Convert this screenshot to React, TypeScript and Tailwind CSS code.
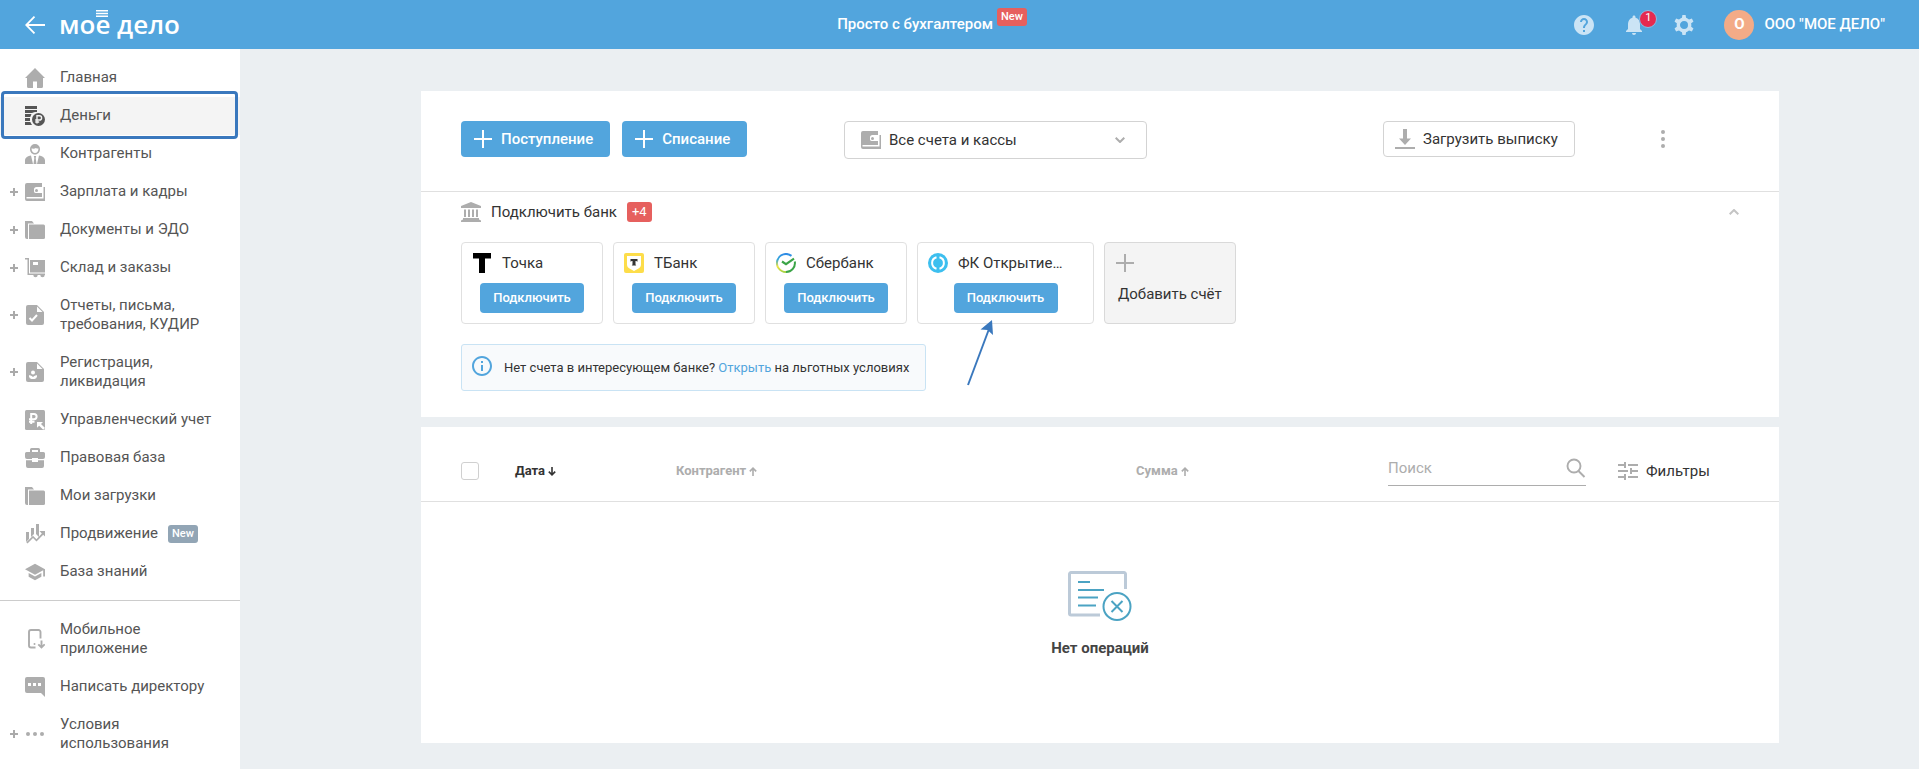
import type { ReactNode } from "react"
import { MdHelp, MdInfoOutline, MdNotifications, MdSchool } from "react-icons/md"
import clsx from "clsx"

function Icon({ children, className }: { children: ReactNode; className?: string }) {
  return (
    <svg viewBox="0 0 20 20" className={clsx("size-5 shrink-0", className)} fill="currentColor" aria-hidden="true">
      {children}
    </svg>
  )
}

const HomeIcon = () => (
  <Icon>
    <path d="M10 0 0 10h2v8.500a1.500 1.500 0 0 0 1.500 1.500H8v-6.500h4V20h4.500a1.500 1.500 0 0 0 1.500-1.500V10h2L10 0Z" />
  </Icon>
)

const MoneyIcon = () => (
  <Icon>
    <path d="M0 0h12v3H0zM0 4h12v2H10q-2 .5-3 1H0zM0 8h6.500l-1.200 3H0zM0 12h5v3H0zM0 16h5.300l1.700 3H0z" />
    <circle cx="13.500" cy="13.500" r="6.500" />
    <path d="M12 17.500V9.800h2.500a2 2 0 0 1 0 4.200H10.200M10.200 16h4" stroke="#f4f4f4" strokeWidth="1.400" fill="none" />
  </Icon>
)

const PersonIcon = () => (
  <Icon>
    <path
      fillRule="evenodd"
      d="M10 0a5 5 0 0 1 5 5c0 3-2 5.500-5 5.500S5 8 5 5a5 5 0 0 1 5-5ZM6.500 4.500C6.500 7 8 9 10 9s3.500-2 3.500-4.500c-1 .3-2 0-2.500-.5-1 .7-3 .8-4.500.5Z"
    />
    <path d="M6 11.500 8 20H0v-3.500C0 13.500 3 12 6 11.500ZM14 11.500 12 20h8v-3.500c0-3-3-4.500-6-5ZM8.800 12h2.400l-.5 2 .8 6h-3l.8-6z" />
  </Icon>
)

const WalletIcon = ({ className }: { className?: string }) => (
  <Icon className={className}>
    <path
      fillRule="evenodd"
      d="M2 1h15v4h-5.500a2.500 2.500 0 0 0-2.500 2.500v1A2.500 2.500 0 0 0 11.500 11H17v4H1.500v1.500H18.500V5H20v14H2a2 2 0 0 1-2-2V3a2 2 0 0 1 2-2Z"
    />
    <path d="M11.500 6H17v4.500h-5.500z" fill="#fff" />
    <circle cx="11.500" cy="8.500" r="2.500" fill="#fff" />
    <circle cx="11.500" cy="8.500" r="1.500" />
  </Icon>
)

const FolderIcon = () => (
  <Icon>
    <path d="M0 1h7l2 2.500H3V19H2a2 2 0 0 1-2-2z" />
    <path d="M4 4.500h14.500A1.500 1.500 0 0 1 20 6v11.500a1.500 1.500 0 0 1-1.500 1.500H4z" />
  </Icon>
)

const CartIcon = () => (
  <Icon>
    <path d="M0 0h4v15.500h16V17H2.500V1.500H0z" />
    <path fillRule="evenodd" d="M5 2h15v12.500H5zm3 2v3h5V4z" />
    <path d="M8.300 17a2.200 2.200 0 0 0 4.400 0zM15.300 17a2.200 2.200 0 0 0 4.400 0z" />
  </Icon>
)

const DocShape = () => (
  <>
    <path d="M3 0h9l7 7v11a2 2 0 0 1-2 2H3a2 2 0 0 1-2-2V2a2 2 0 0 1 2-2Z" />
    <path d="M12 1.500V7h5.500z" fill="#fff" />
  </>
)

const DocCheckIcon = () => (
  <Icon>
    <DocShape />
    <path d="m4.500 13 2.500 2.500 5-5.500" stroke="#fff" strokeWidth="2" fill="none" />
  </Icon>
)

const DocPersonIcon = () => (
  <Icon>
    <DocShape />
    <circle cx="8" cy="10.500" r="2" fill="#fff" />
    <path d="M4 13.300c1 0 2 .2 4 1.700 2-1.500 3-1.700 4-1.700v1.200A3 3 0 0 1 9.500 17h-3A3 3 0 0 1 4 14.500z" fill="#fff" />
  </Icon>
)

const RubleIcon = () => (
  <Icon>
    <rect width="20" height="20" rx="1.500" />
    <path d="M6.200 14V4h2.800a2.500 2.500 0 0 1 0 5.200H4M4 11.700h5.500" stroke="#fff" strokeWidth="2" fill="none" />
    <path d="M12 12h6l-2 2 4 4-1.800 1.800-4-4-2.200 2z" fill="#fff" />
  </Icon>
)

const BriefcaseIcon = () => (
  <Icon>
    <path
      fillRule="evenodd"
      d="M6.500 0h7A1.500 1.500 0 0 1 15 1.500V4h3.500A1.500 1.500 0 0 1 20 5.500V9a2 2 0 0 1-2 2h-5v-1H7v1H2a2 2 0 0 1-2-2V5.500A1.500 1.500 0 0 1 1.500 4H5V1.500A1.500 1.500 0 0 1 6.500 0ZM7 2v2h6V2z"
    />
    <path d="M1 12.200h6V14h6v-1.800h6V18a2 2 0 0 1-2 2H3a2 2 0 0 1-2-2z" />
  </Icon>
)

const PromoIcon = () => (
  <Icon>
    <path d="M1 8h3v7l-3 3zM6 4h3v6l-3 3zM11 0h3v13l-3-3z" />
    <path d="M14.500 7H20v5.500L18.200 10.700 11.500 17.500 8 14l-5.500 5.500L1.300 18.300 8 11.700l3.500 3.500 5.300-5.700z" />
  </Icon>
)

const PhoneIcon = () => (
  <Icon>
    <path d="M15.500 9.500V3a2 2 0 0 0-2-2H6a2 2 0 0 0-2 2v13.500a2 2 0 0 0 2 2h4.500M16.500 11.500v6.500M13.300 15.300l3.200 3.200 3.200-3.200" stroke="currentColor" strokeWidth="1.900" fill="none" />
    <circle cx="9.500" cy="15" r="1" />
  </Icon>
)

const ChatIcon = () => (
  <Icon>
    <path d="M2 0h16a2 2 0 0 1 2 2v18l-4-4H2a2 2 0 0 1-2-2V2a2 2 0 0 1 2-2Z" />
    <path d="M3 6h3v3H3zM8 6h3v3H8zM13 6h3v3h-3z" fill="#fff" />
  </Icon>
)

const DotsIcon = () => (
  <Icon>
    <circle cx="3" cy="10" r="2" />
    <circle cx="10" cy="10" r="2" />
    <circle cx="17" cy="10" r="2" />
  </Icon>
)

const PlusIcon = ({ className }: { className?: string }) => (
  <svg viewBox="0 0 18 18" className={clsx("size-[18px] shrink-0", className)} fill="currentColor" aria-hidden="true">
    <path d="M8 0h2v8h8v2h-8v8H8v-8H0V8h8z" />
  </svg>
)

const GearIcon = () => (
  <Icon>
    <circle cx="10" cy="10" r="5.700" fill="none" stroke="currentColor" strokeWidth="3.400" />
    {[0, 60, 120, 180, 240, 300].map((angle) => (
      <path key={angle} d="M7.800 3.500 8.400 0h3.200l.6 3.500z" transform={`rotate(${angle} 10 10)`} />
    ))}
  </Icon>
)

const BankIcon = () => (
  <Icon>
    <path d="M10 0 20 4v2H0V4zM3 7.500h2v7.500H3zM7 7.500h2v7.500H7zM11 7.500h2v7.500h-2zM15 7.500h2v7.500h-2zM2 16h16v1.500l2 1V20H0v-1.500l2-1z" />
  </Icon>
)

const DownloadIcon = () => (
  <Icon>
    <path d="M8 0h4v9.500h4L10 16 4 9.500h4zM0 18h20v2H0z" />
  </Icon>
)

const SearchIcon = () => (
  <Icon>
    <circle cx="8" cy="8" r="6.500" fill="none" stroke="currentColor" strokeWidth="1.900" />
    <path d="m12.500 13 6 6" stroke="currentColor" strokeWidth="2" />
  </Icon>
)

const TuneIcon = () => (
  <Icon>
    <path d="M0 3h6v2H0zM6 1h2v6H6zM10 3h10v2H10zM0 9h10v2H0zM12 7h2v6h-2zM14 9h6v2h-6zM0 15h6v2H0zM6 13h2v6H6zM10 15h10v2H10z" />
  </Icon>
)

const TochkaLogo = () => (
  <Icon className="text-black">
    <path d="M1 0h18v5.500h-6V20H7V5.500H1z" />
  </Icon>
)

const TbankLogo = () => (
  <Icon>
    <rect width="20" height="20" rx="2" fill="#fddd4a" />
    <path d="M3 3h14v8.500c0 2-1 3.200-2.500 4L10 18l-4.500-2.500C4 14.700 3 13.500 3 11.500z" fill="#fff" />
    <path d="M6.500 6h7v2.800c-.5-.6-1-.8-2-.8v3c0 .7.300 1.200.8 1.500H7.700c.5-.3.800-.8.800-1.500V8c-1 0-1.500.2-2 .8z" fill="#333" />
  </Icon>
)

const SberLogo = () => (
  <Icon>
    <defs>
      <linearGradient id="sber" x1="0" y1="0" x2="0" y2="1">
        <stop offset="0" stopColor="#2f8be6" />
        <stop offset=".3" stopColor="#35a8d8" />
        <stop offset=".7" stopColor="#f0e442" />
        <stop offset="1" stopColor="#a5d146" />
      </linearGradient>
    </defs>
    <path d="M10 19A9 9 0 1 1 15.500 2.900" fill="none" stroke="url(#sber)" strokeWidth="2" />
    <path d="M18.800 8.500A9 9 0 0 1 10 19" fill="none" stroke="#3ba447" strokeWidth="2" />
    <path d="m6 8.500 4 2.600 8-5.400" fill="none" stroke="#3ba447" strokeWidth="2.200" />
  </Icon>
)

const OpenLogo = () => (
  <Icon className="text-[#3dbfef]">
    <circle cx="10" cy="10" r="10" />
    <path d="M8.500 4.300A5.900 5.900 0 0 0 8.500 15.700M11.500 4.300a5.900 5.900 0 0 1 0 11.400" fill="none" stroke="#fff" strokeWidth="2" />
  </Icon>
)

type MenuItem = { label: string; icon: ReactNode; plus?: boolean; active?: boolean; badge?: string }

const menu: MenuItem[] = [
  { label: "Главная", icon: <HomeIcon /> },
  { label: "Деньги", icon: <MoneyIcon />, active: true },
  { label: "Контрагенты", icon: <PersonIcon /> },
  { label: "Зарплата и кадры", icon: <WalletIcon />, plus: true },
  { label: "Документы и ЭДО", icon: <FolderIcon />, plus: true },
  { label: "Склад и заказы", icon: <CartIcon />, plus: true },
  { label: "Отчеты, письма, требования, КУДИР", icon: <DocCheckIcon />, plus: true },
  { label: "Регистрация, ликвидация", icon: <DocPersonIcon />, plus: true },
  { label: "Управленческий учет", icon: <RubleIcon /> },
  { label: "Правовая база", icon: <BriefcaseIcon /> },
  { label: "Мои загрузки", icon: <FolderIcon /> },
  { label: "Продвижение", icon: <PromoIcon />, badge: "New" },
  { label: "База знаний", icon: <MdSchool viewBox="1 2 22 20" className="size-5 shrink-0" /> },
]

const extraMenu: MenuItem[] = [
  { label: "Мобильное приложение", icon: <PhoneIcon /> },
  { label: "Написать директору", icon: <ChatIcon /> },
  { label: "Условия использования", icon: <DotsIcon />, plus: true },
]

const banks = [
  { name: "Точка", logo: <TochkaLogo /> },
  { name: "ТБанк", logo: <TbankLogo /> },
  { name: "Сбербанк", logo: <SberLogo /> },
  { name: "ФК Открытие…", logo: <OpenLogo />, wide: true },
]

function MenuLink({ item }: { item: MenuItem }) {
  return (
    <li className="relative">
      <a
        href="#"
        className={clsx(
          "flex items-center pt-[9px] pr-5 pb-[10px] pl-[10px] text-[15px] leading-[19px] text-[#555]",
          item.active && "bg-[#f4f4f4]"
        )}
      >
        <span className="w-[15px] shrink-0 text-[#aaa]">{item.plus && <PlusMark />}</span>
        <span className={clsx("-my-1", item.active ? "text-[#555]" : "text-[#adadad]")}>{item.icon}</span>
        <span className="ml-[15px] max-w-[155px]">{item.label}</span>
        {item.badge && (
          <span className="-my-1 ml-[10px] rounded-[3px] bg-[#92a5b5] px-1 text-[11px] leading-[18px] font-medium text-white">
            {item.badge}
          </span>
        )}
      </a>
      {item.active && (
        <span className="pointer-events-none absolute -top-[6px] right-[2px] -bottom-1 left-px rounded-[4px] border-[3px] border-[#3a78bd]" />
      )}
    </li>
  )
}

const PlusMark = () => (
  <svg viewBox="0 0 8 8" className="size-2" fill="currentColor" aria-hidden="true">
    <path d="M3 0h2v3h3v2H5v3H3V5H0V3h3z" />
  </svg>
)

function Header() {
  return (
    <header className="grid h-[49px] grid-cols-[1fr_auto_1fr] items-center bg-[#52a5dd] pr-[34px] pl-[25px] text-[15px] text-white">
      <div className="flex items-center gap-[14px]">
        <button type="button" aria-label="Назад">
          <svg viewBox="0 0 20 18" className="h-[18px] w-5" fill="none" stroke="currentColor" strokeWidth="1.800">
            <path d="M9.500.6 1.200 9l8.300 8.400M1.200 9H20" />
          </svg>
        </button>
        <a href="#" className="relative pb-[2px] font-['Open_Sans',sans-serif] text-[26px] leading-[34px] font-semibold">
          мое дело
          <svg viewBox="0 0 12 7" className="absolute top-[3px] left-[37px] h-[7px] w-3" fill="currentColor" aria-hidden="true">
            <path d="M0 0h12v1.400H0zM0 2.800h12v1.400H0zM0 5.600h12V7H0z" />
          </svg>
        </a>
      </div>
      <a href="#" className="flex items-center gap-1 pr-[46px] font-medium">
        Просто с бухгалтером
        <span className="mb-4 rounded-[3px] bg-[#e6605e] px-1 text-[11px] leading-[18px]">New</span>
      </a>
      <div className="flex items-center justify-end">
        <button type="button" aria-label="Помощь" className="text-[#cbe4f5]">
          <MdHelp className="size-6" />
        </button>
        <button type="button" aria-label="Уведомления" className="relative ml-[26px] text-[#cbe4f5]">
          <MdNotifications className="size-6" />
          <span className="absolute -top-[3px] left-[17px] flex size-[18px] items-center justify-center rounded-full border border-[#86bfe7] bg-[#e52a50] text-[11px] text-white">
            1
          </span>
        </button>
        <button type="button" aria-label="Настройки" className="ml-7 text-[#cbe4f5]">
          <GearIcon />
        </button>
        <button type="button" className="ml-[30px] flex items-center gap-[10px] font-medium">
          <span className="flex size-[30px] items-center justify-center rounded-full bg-[#f3ab87] font-bold">О</span>
          ООО "МОЕ ДЕЛО"
        </button>
      </div>
    </header>
  )
}

function Sidebar() {
  return (
    <nav className="w-60 shrink-0 bg-white pt-[10px]">
      <ul>
        {menu.map((item) => (
          <MenuLink key={item.label} item={item} />
        ))}
      </ul>
      <hr className="mt-[9px] mb-[10px] border-[#ccc]" />
      <ul>
        {extraMenu.map((item) => (
          <MenuLink key={item.label} item={item} />
        ))}
      </ul>
    </nav>
  )
}

function Toolbar() {
  return (
    <div className="grid grid-cols-[383px_1fr_356px] items-start border-b border-[#e0e0e0] px-10 pt-[30px] pb-8">
      <div className="flex gap-3">
        {["Поступление", "Списание"].map((label) => (
          <button
            key={label}
            type="button"
            className="flex h-9 items-center gap-[9px] rounded-[4px] bg-[#52a5dd] pr-[17px] pl-[13px] font-medium text-white"
          >
            <PlusIcon />
            {label}
          </button>
        ))}
      </div>
      <div className="relative w-[303px] text-[#adadad]">
        <select
          aria-label="Счета"
          className="block h-[38px] w-full appearance-none rounded-[4px] border border-[#d3d3d3] bg-white pr-10 pl-11 text-[#333]"
        >
          <option>Все счета и кассы</option>
        </select>
        <WalletIcon className="pointer-events-none absolute top-[9px] left-[17px]" />
        <svg viewBox="0 0 10 6" className="pointer-events-none absolute top-4 right-[22px] h-[6px] w-[10px]" fill="none" stroke="currentColor" strokeWidth="2" aria-hidden="true">
          <path d="m.7.700 4.300 4.300 4.300-4.300" />
        </svg>
      </div>
      <div className="flex items-center gap-[78px]">
        <button type="button" className="flex h-9 items-center gap-2 rounded-[4px] border border-[#d3d3d3] pr-4 pl-[11px]">
          <span className="text-[#adadad]">
            <DownloadIcon />
          </span>
          Загрузить выписку
        </button>
        <button type="button" aria-label="Ещё" className="rotate-90 text-[#adadad]">
          <DotsIcon />
        </button>
      </div>
    </div>
  )
}

function ConnectBank() {
  return (
    <div className="px-10 pt-[10px] pb-[26px]">
      <div className="flex items-center leading-5">
        <span className="text-[#adadad]">
          <BankIcon />
        </span>
        <h2 className="ml-[10px]">Подключить банк</h2>
        <span className="ml-[10px] rounded-[3px] bg-[#e6605e] px-[5px] text-[13px] leading-5 text-white">+4</span>
        <button type="button" aria-label="Свернуть" className="ml-auto flex h-5 items-center text-[#c4c4c4]">
          <svg viewBox="0 0 10 6" className="h-[6px] w-[10px]" fill="none" stroke="currentColor" strokeWidth="2">
            <path d="m.7 5.300 4.300-4.300 4.300 4.300" />
          </svg>
        </button>
      </div>

      <div className="mt-5 flex gap-[10px]">
        {banks.map((bank) => (
          <div
            key={bank.name}
            className={clsx("relative h-[82px] rounded-[4px] border border-[#e0e0e0] p-[10px]", bank.wide ? "w-[177px]" : "w-[142px]")}
          >
            <div className="flex items-center gap-[10px] leading-5">
              {bank.logo}
              {bank.name}
            </div>
            <button
              type="button"
              className="mx-auto mt-[10px] block h-[30px] w-[104px] rounded-[4px] bg-[#52a5dd] text-[13px] font-medium text-white"
            >
              Подключить
            </button>
            {bank.wide && (
              <svg viewBox="0 0 28 66" className="pointer-events-none absolute top-[77px] left-[49px] h-[66px] w-7" aria-hidden="true">
                <path d="M1 65 22 9" stroke="#3a78bd" strokeWidth="2" />
                <path d="M25 0 13.500 9.500l7 .5 5.500 5z" fill="#3a78bd" />
              </svg>
            )}
          </div>
        ))}
        <button type="button" className="flex h-[82px] w-[132px] flex-col rounded-[4px] border border-[#d9d9d9] bg-[#f4f4f4] px-[11px] pt-[11px] text-left">
          <PlusIcon className="text-[#adadad]" />
          <span className="mt-3 ml-[2px] leading-5 whitespace-nowrap">Добавить счёт</span>
        </button>
      </div>

      <div className="mt-5 flex h-[47px] w-[465px] items-center gap-[10px] rounded-[3px] border border-[#c9e3f4] bg-[#f8fafc] pl-2 text-[13px]">
        <MdInfoOutline className="mb-1 size-6 shrink-0 text-[#52a5dd]" />
        <p className="whitespace-nowrap">
          Нет счета в интересующем банке?{" "}
          <a href="#" className="text-[#52a5dd]">
            Открыть
          </a>{" "}
          на льготных условиях
        </p>
      </div>
    </div>
  )
}

function SortArrow({ down }: { down?: boolean }) {
  return (
    <svg viewBox="0 0 8 9" className={clsx("ml-[3px] inline-block h-[9px] w-2", down && "rotate-180")} fill="none" stroke="currentColor" strokeWidth="1.600" aria-hidden="true">
      <path d="M4 9V1.200M.8 4.400 4 1.200l3.200 3.200" />
    </svg>
  )
}

function Operations() {
  return (
    <table className="w-full table-fixed bg-white">
      <colgroup>
        <col className="w-[94px]" />
        <col className="w-[161px]" />
        <col />
        <col className="w-[252px]" />
        <col className="w-[391px]" />
      </colgroup>
      <thead>
        <tr className="h-[74px] border-b border-[#e0e0e0] text-left text-[13px] text-[#adadad]">
          <th className="pt-[14px] pl-10">
            <input
              type="checkbox"
              aria-label="Выбрать все"
              className="block size-[18px] appearance-none rounded-[3px] border border-[#d0d0d0] bg-white"
            />
          </th>
          <th className="pt-[14px] text-[#333]">
            <button type="button">
              Дата
              <SortArrow down />
            </button>
          </th>
          <th className="pt-[14px]">
            <button type="button">
              Контрагент
              <SortArrow />
            </button>
          </th>
          <th className="pt-[14px]">
            <button type="button">
              Сумма
              <SortArrow />
            </button>
          </th>
          <th className="pt-[14px] text-[15px] font-normal">
            <div className="flex items-center gap-8">
              <div className="flex h-[30px] w-[198px] items-center border-b border-[#adadad] pb-1">
                <input
                  type="search"
                  aria-label="Поиск"
                  placeholder="Поиск"
                  className="min-w-0 flex-1 outline-none placeholder:text-[#adadad]"
                />
                <SearchIcon />
              </div>
              <button type="button" className="flex items-center gap-2">
                <TuneIcon />
                <span className="text-[#333]">Фильтры</span>
              </button>
            </div>
          </th>
        </tr>
      </thead>
      <tbody>
        <tr>
          <td colSpan={5} className="pt-[69px] pb-[85px] text-center">
            <svg viewBox="0 0 64 50" className="mx-auto h-[50px] w-16" fill="none" strokeWidth="2" aria-hidden="true">
              <path d="M57.500 18V3a1.500 1.500 0 0 0-1.500-1.500H3A1.500 1.500 0 0 0 1.500 3v39.500A1.500 1.500 0 0 0 3 44h29" stroke="#bccad8" strokeWidth="3" />
              <path d="M10 11h12M10 19h26M10 26.500h20M10 34.500h18" stroke="#4ba3c3" />
              <circle cx="49" cy="35.500" r="13.500" stroke="#4ba3c3" />
              <path d="m43.500 30 11 11m0-11-11 11" stroke="#4ba3c3" />
            </svg>
            <p className="mt-[17px] leading-5 font-bold text-[#444]">Нет операций</p>
          </td>
        </tr>
      </tbody>
    </table>
  )
}

export default function App() {
  return (
    <div className="flex min-h-screen flex-col bg-[#ebeff2] font-[Roboto,sans-serif] text-[15px] text-[#333]">
      <Header />
      <div className="flex flex-1">
        <Sidebar />
        <main className="min-w-0 flex-1 pt-[42px] pr-[140px] pb-[26px] pl-[181px]">
          <section className="mb-[10px] bg-white">
            <Toolbar />
            <ConnectBank />
          </section>
          <Operations />
        </main>
      </div>
    </div>
  )
}
